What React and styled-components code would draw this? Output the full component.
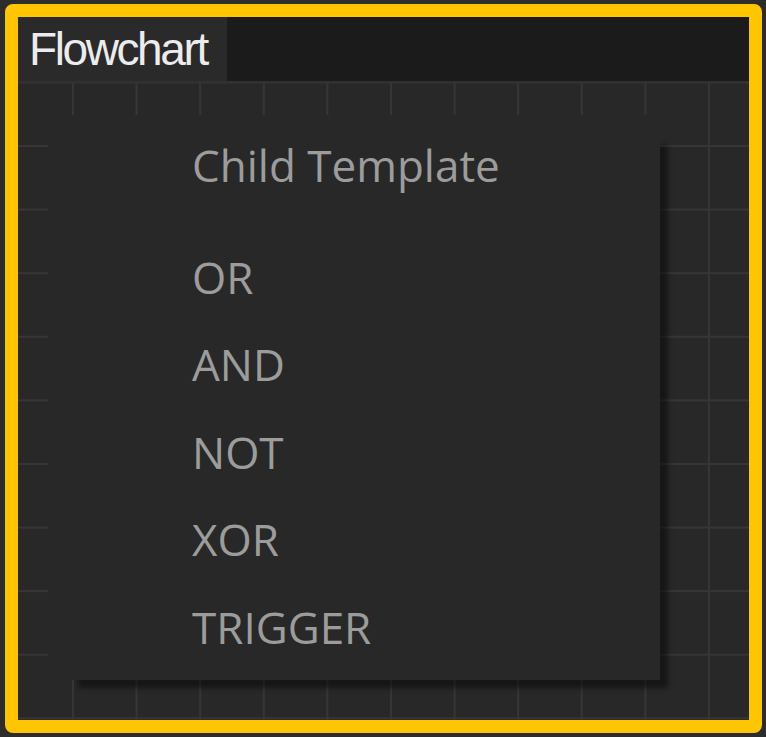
import React from "react";
import styled, { createGlobalStyle } from "styled-components";

const Global = createGlobalStyle`
  html, body { margin: 0; padding: 0; background: #2c2c2c; }
  body { width: 766px; height: 737px; overflow: hidden; }
`;

const Frame = styled.div`
  box-sizing: border-box;
  margin: 4px 0 0 5px;
  width: 757px;
  height: 729px;
  border: 13px solid #ffc600;
  border-radius: 8px;
  display: flex;
  flex-direction: column;
  overflow: hidden;
  background: #282828;
`;

const Header = styled.div`
  display: flex;
  height: 64px;
  background: #1b1b1b;
  border-bottom: 2px solid #313131;
  flex: none;
`;

const Tab = styled.div`
  width: 209px;
  background: #2a2a2a;
  color: #ececec;
  font-family: "Liberation Sans", Arial, sans-serif;
  font-size: 46px;
  letter-spacing: -2.4px;
  line-height: 64px;
  padding-left: 11px;
  box-sizing: border-box;
  white-space: nowrap;
`;

const Canvas = styled.div`
  position: relative;
  flex: 1;
  background-color: #282828;
  background-image:
    linear-gradient(to right, #363636 0, #363636 2px, transparent 2px),
    linear-gradient(to bottom, #363636 0, #363636 2px, transparent 2px);
  background-size: 63.6px 63.6px;
  background-position: 54px 62px;
`;

const Menu = styled.div`
  position: absolute;
  left: 30px;
  top: 32px;
  width: 612px;
  height: 565px;
  background: #282828;
  box-shadow: 19px 19px 5px -11px rgba(0, 0, 0, 0.45);
  box-sizing: border-box;
  padding: 7px 0 0 144px;
  display: flex;
  flex-direction: column;
`;

const Item = styled.div`
  font-family: "Open Sans", Lato, sans-serif;
  font-size: 44px;
  line-height: 87.5px;
  height: 87.5px;
  color: #9c9c9c;
  white-space: nowrap;
  margin-bottom: ${(p) => (p.$title ? "24px" : "0")};
`;

const items = ["OR", "AND", "NOT", "XOR", "TRIGGER"];

export default function App() {
  return (
    <>
      <Global />
      <Frame>
        <Header>
          <Tab>Flowchart</Tab>
        </Header>
        <Canvas>
          <Menu>
            <Item $title>Child Template</Item>
            {items.map((t) => (
              <Item key={t}>{t}</Item>
            ))}
          </Menu>
        </Canvas>
      </Frame>
    </>
  );
}
